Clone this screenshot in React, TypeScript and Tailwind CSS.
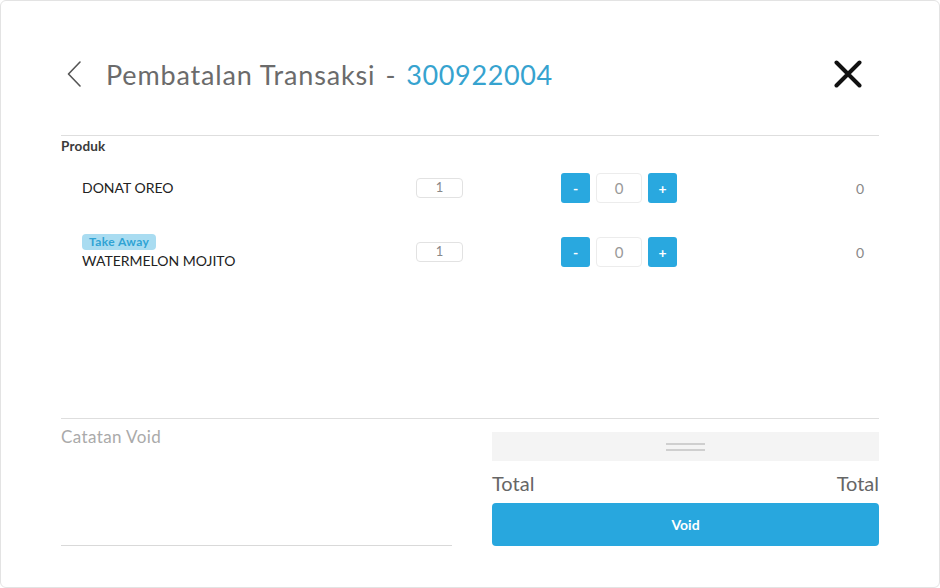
import type { ReactNode } from "react";

const items = [
  { name: "DONAT OREO", qty: 1, tag: null as string | null },
  { name: "WATERMELON MOJITO", qty: 1, tag: "Take Away" },
];

export default function App() {
  return (
    <div className="h-[588px] w-[940px] bg-white font-['Lato','Liberation_Sans',sans-serif]">
      <div className="flex h-full flex-col rounded-[6px] border border-[#e3e3e3] px-[60px]">
        <header className="mt-[48px] flex h-[50px] items-center">
          <button type="button" className="ml-[6px] flex h-[26px] w-[16px] items-center" aria-label="Kembali">
            <svg width="14" height="26" viewBox="0 0 14 26" fill="none">
              <path d="M13 1 L1.5 13 L13 25" stroke="#555" strokeWidth="1.6" strokeLinecap="round" strokeLinejoin="round" />
            </svg>
          </button>
          <h1 className="ml-[23px] text-[27px] leading-none tracking-[0.85px] text-[#6b6b6b]">
            Pembatalan Transaksi<span className="mx-[10px]">-</span><span className="tracking-[0.6px] text-[#36a3cf]">300922004</span>
          </h1>
          <button type="button" className="ml-auto mr-[17px] flex h-[28px] w-[28px] items-center justify-center" aria-label="Tutup">
            <svg width="28" height="28" viewBox="0 0 28 28" fill="none">
              <path d="M2.5 2.5 L25.5 25.5 M25.5 2.5 L2.5 25.5" stroke="#111" strokeWidth="4" strokeLinecap="round" />
            </svg>
          </button>
        </header>

        <div className="mt-[36px] h-[283px] border-t border-[#dedede]">
          <p className="h-[20px] text-[13.5px] leading-[20px] font-bold tracking-[0.2px] text-[#3a3a3a]">Produk</p>
          {items.map((item) => (
            <ProductRow key={item.name} name={item.name} qty={item.qty} tag={item.tag} />
          ))}
        </div>

        <div className="flex gap-[40px] border-t border-[#dedede]">
          <div className="h-[127px] w-[391px] border-b border-[#d9d9d9] pt-[8px] text-[17px] leading-[20px] tracking-[0.4px] text-[#aaaaaa]">Catatan Void</div>
          <div className="flex-1 pt-[13px]">
            <div className="flex h-[29px] flex-col items-center justify-center gap-[4px] bg-[#f4f4f4]">
              <span className="h-[2px] w-[39px] bg-[#cfcfcf]" />
              <span className="h-[2px] w-[39px] bg-[#cfcfcf]" />
            </div>
            <div className="flex h-[42px] items-center justify-between pt-[2px] text-[20px] text-[#666666]">
              <span>Total</span>
              <span>Total</span>
            </div>
            <button type="button" className="h-[43px] w-full rounded-[4px] bg-[#28a7de] text-[14px] font-bold text-white">
              Void
            </button>
          </div>
        </div>
      </div>
    </div>
  );
}

function ProductRow({ name, qty, tag }: { name: string; qty: number; tag: string | null }) {
  return (
    <div className="flex h-[64px] items-center">
      <div className="flex w-[355px] flex-col items-start pl-[21px]">
        {tag ? (
          <span className="mb-[2px] rounded-[4px] bg-[#a9dcf1] px-[7px] text-[12px] leading-[16px] font-bold tracking-[0.4px] text-[#2fa3d4]">{tag}</span>
        ) : null}
        <span className="text-[14px] leading-[18px] text-[#222]">{name}</span>
      </div>
      <div className="flex h-[20px] w-[47px] items-center justify-center rounded-[4px] border border-[#e2e2e2] text-[13px] text-[#888]">{qty}</div>
      <div className="ml-[98px] flex items-center">
        <StepButton>-</StepButton>
        <div className="mx-[6px] flex h-[30px] w-[46px] items-center justify-center rounded-[4px] border border-[#ececec] text-[15px] text-[#999]">0</div>
        <StepButton>+</StepButton>
      </div>
      <span className="ml-auto mr-[15px] text-[14px] text-[#888]">0</span>
    </div>
  );
}

function StepButton({ children }: { children: ReactNode }) {
  return (
    <button type="button" className="flex h-[30px] w-[29px] items-center justify-center rounded-[3px] bg-[#29a8df] text-[14px] font-bold text-white">
      {children}
    </button>
  );
}
